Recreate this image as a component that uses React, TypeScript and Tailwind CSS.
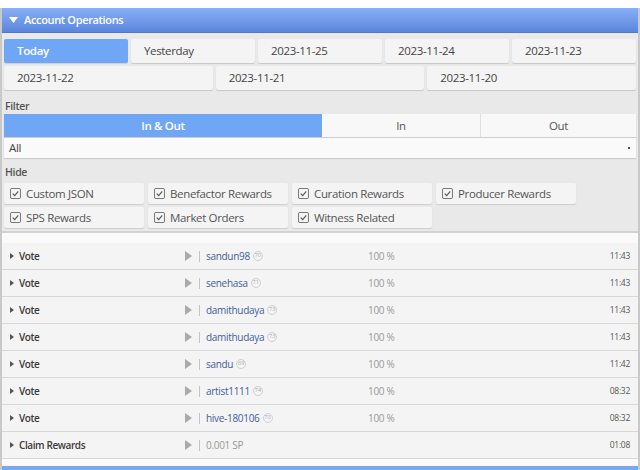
import type { ReactNode } from 'react'

const dates1 = ['Today', 'Yesterday', '2023-11-25', '2023-11-24', '2023-11-23']
const dates2 = ['2023-11-22', '2023-11-21', '2023-11-20']
const hideRow1 = ['Custom JSON', 'Benefactor Rewards', 'Curation Rewards', 'Producer Rewards']
const hideRow2 = ['SPS Rewards', 'Market Orders', 'Witness Related']

interface Op {
  type: string
  name?: string
  rep?: number
  value?: string
  pct?: string
  time: string
}

const ops: Op[] = [
  { type: 'Vote', name: 'sandun98', rep: 70, pct: '100 %', time: '11:43' },
  { type: 'Vote', name: 'senehasa', rep: 71, pct: '100 %', time: '11:43' },
  { type: 'Vote', name: 'damithudaya', rep: 73, pct: '100 %', time: '11:43' },
  { type: 'Vote', name: 'damithudaya', rep: 73, pct: '100 %', time: '11:43' },
  { type: 'Vote', name: 'sandu', rep: 69, pct: '100 %', time: '11:42' },
  { type: 'Vote', name: 'artist1111', rep: 74, pct: '100 %', time: '08:32' },
  { type: 'Vote', name: 'hive-180106', rep: 70, pct: '100 %', time: '08:32' },
  { type: 'Claim Rewards', value: '0.001 SP', time: '01:08' },
]

function DateButton({ label, active }: { label: string; active?: boolean }) {
  return (
    <div
      className={
        active
          ? 'h-[24px] flex items-center pl-[13px] rounded-[2px] bg-[#6fa6f5] text-white font-semibold shadow-[0_1px_1px_rgba(0,0,0,0.12)]'
          : 'h-[24px] flex items-center pl-[13px] rounded-[2px] bg-[#f4f4f4] text-[#444] shadow-[0_1px_1px_rgba(0,0,0,0.15)]'
      }
    >
      {label}
    </div>
  )
}

function CheckBox({ label }: { label: string }) {
  return (
    <div className="w-[140px] h-[21px] flex items-center pl-[6px] bg-[#f4f4f4] rounded-[2px] shadow-[0_1px_1px_rgba(0,0,0,0.12)] text-[#555]">
      <svg width="11" height="11" viewBox="0 0 12 12" className="shrink-0">
        <rect x="0.5" y="0.5" width="11" height="11" rx="1.5" fill="none" stroke="#666" />
        <path d="M3 6.2 L5.1 8.3 L9 3.6" fill="none" stroke="#555" strokeWidth="1.2" />
      </svg>
      <span className="ml-[5px]">{label}</span>
    </div>
  )
}

function Label({ children }: { children: ReactNode }) {
  return <div className="text-[10.5px] font-semibold text-[#555] pl-[1px] leading-[12px]">{children}</div>
}

function OpRow({ op }: { op: Op }) {
  return (
    <div className="h-[27px] flex items-center bg-[#f4f4f4] border-b border-[#d8d8d8] pl-[8px] pr-[8px] text-[10px] tracking-[-0.03em]">
      <svg width="4" height="6" viewBox="0 0 4 6" className="shrink-0">
        <path d="M0 0 L4 3 L0 6 Z" fill="#555" />
      </svg>
      <span className="ml-[5px] w-[166px] font-semibold text-[#3a3a3a] tracking-[-0.04em]">{op.type}</span>
      <svg width="7" height="10" viewBox="0 0 7 10" className="shrink-0">
        <path d="M0 0 L7 5 L0 10 Z" fill="#aaa" />
      </svg>
      <span className="ml-[7px] w-px h-[11px] bg-[#c4c4c4]" />
      <span className="ml-[6px] w-[162px] flex items-center">
        {op.name ? (
          <>
            <span className="text-[#3f5f9c]">{op.name}</span>
            <span className="ml-[3px] w-[10px] h-[10px] rounded-full border border-[#d0d0d0] text-[5.5px] leading-none tracking-normal text-[#aaa] flex items-center justify-center">
              {op.rep}
            </span>
          </>
        ) : (
          <span className="text-[#999]">{op.value}</span>
        )}
      </span>
      <span className="flex-1 text-[#999]">{op.pct}</span>
      <span className="text-[8.5px] text-[#555]">{op.time}</span>
    </div>
  )
}

export default function App() {
  return (
    <div className="w-[640px] h-[470px] overflow-hidden bg-white pt-[8px] font-['Open_Sans',sans-serif] text-[11.5px] tracking-[-0.03em]">
      <div className="border-x-2 border-[#c9c9c9]">
        <div className="h-[25px] flex items-center pl-[7px] bg-gradient-to-b from-[#88aff6] to-[#5a86de] border-b border-[#4d78cc] text-white font-semibold text-[11px]">
          <svg width="9" height="6" viewBox="0 0 9 6">
            <path d="M0 0 L9 0 L4.5 6 Z" fill="#fff" />
          </svg>
          <span className="ml-[6px]">Account Operations</span>
        </div>

        <div className="bg-[#e9e9e9] px-[2px] pt-[6px] pb-[3px] border-b-2 border-[#d2d2d2]">
          <div className="grid grid-cols-5 gap-[3px]">
            {dates1.map((d, i) => (
              <DateButton key={d} label={d} active={i === 0} />
            ))}
          </div>
          <div className="grid grid-cols-3 gap-[3px] mt-[3px]">
            {dates2.map((d) => (
              <DateButton key={d} label={d} />
            ))}
          </div>

          <div className="mt-[10px]">
            <Label>Filter</Label>
          </div>
          <div className="grid grid-cols-[318px_159px_1fr] mt-[2px] h-[23px] shadow-[0_1px_1px_rgba(0,0,0,0.12)]">
            <div className="flex items-center justify-center bg-[#6fa6f5] text-white font-semibold">In &amp; Out</div>
            <div className="flex items-center justify-center bg-[#f8f8f8] text-[#555] border-r border-[#e0e0e0]">In</div>
            <div className="flex items-center justify-center bg-[#f8f8f8] text-[#555]">Out</div>
          </div>
          <div className="mt-[1px] h-[20px] flex items-center justify-between pl-[5px] pr-[6px] bg-[#fafafa] shadow-[0_1px_1px_rgba(0,0,0,0.12)] text-[#444]">
            <span>All</span>
            <span className="w-[2px] h-[2px] bg-[#555]" />
          </div>

          <div className="mt-[8px]">
            <Label>Hide</Label>
          </div>
          <div className="mt-[5px] flex gap-[4px]">
            {hideRow1.map((h) => (
              <CheckBox key={h} label={h} />
            ))}
          </div>
          <div className="mt-[3px] flex gap-[4px]">
            {hideRow2.map((h) => (
              <CheckBox key={h} label={h} />
            ))}
          </div>
        </div>

        <div className="h-[10px] bg-[#fafafa]" />
        <div>
          {ops.map((op, i) => (
            <OpRow key={i} op={op} />
          ))}
        </div>
        <div className="h-[7px] bg-[#fafafa]" />
        <div className="h-[6px] bg-[#7ea6ee]" />
      </div>
    </div>
  )
}
